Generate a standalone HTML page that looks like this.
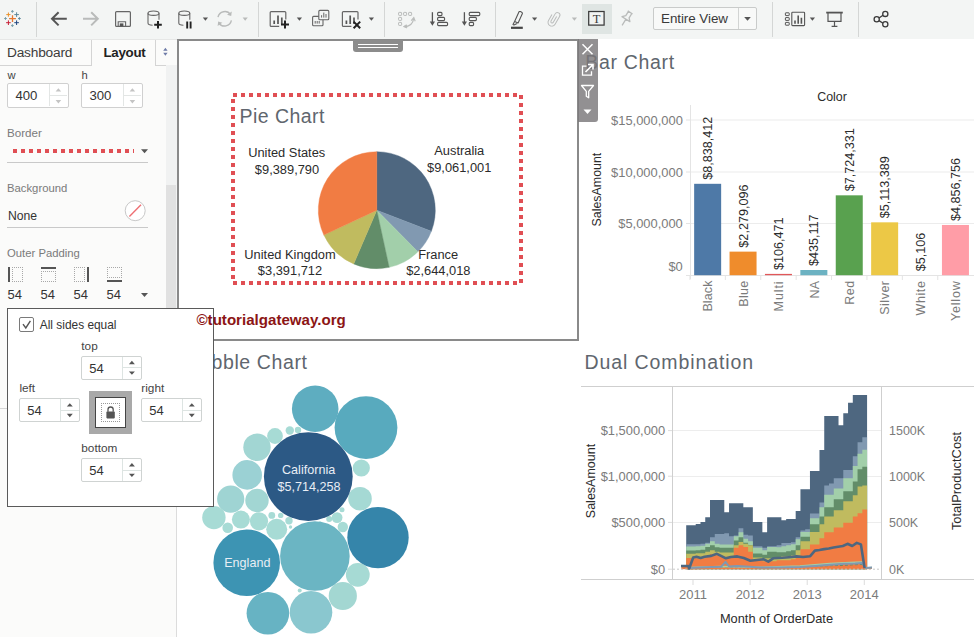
<!DOCTYPE html>
<html lang="en">
<head>
<meta charset="utf-8">
<title>Tableau Dashboard Layout - Outer Padding</title>
<style>
html,body{margin:0;padding:0;}
body{width:974px;height:637px;overflow:hidden;background:#fff;position:relative;font-family:"Liberation Sans",sans-serif;font-size:12px;color:#333;}
.a{position:absolute;}
.t{position:absolute;white-space:nowrap;line-height:1;}
svg{position:absolute;left:0;top:0;overflow:visible;}
svg text{font-family:"Liberation Sans",sans-serif;}
svg text.serif{font-family:"Liberation Serif",serif;}
#toolbar{left:0;top:0;width:974px;height:39px;background:#f3f5f4;}
#leftpanel{left:0;top:39px;width:177px;height:598px;background:#fbfbfa;}
.vsep{position:absolute;top:2px;width:1px;height:35px;background:#d4d6d5;}
.inp{position:absolute;box-sizing:border-box;border:1px solid #d0d0d0;border-radius:2px;background:#fff;}
.lbl{color:#7a7a7a;}
.ul{position:absolute;height:1px;background:#c9c9c9;}
.title{font-size:19.5px;color:#60666e;letter-spacing:.3px;}
.ax{font-size:12.5px;fill:#7b7b7b;}
</style>
</head>
<body>

<!-- ===== canvas zones (under everything) ===== -->
<div class="a" id="canvas" style="left:177px;top:39px;width:797px;height:598px;background:#fff;"></div>

<!-- ZONE: bar chart -->
<div id="barzone" class="a" style="left:0;top:0;width:974px;height:637px;">
<div class="t title" id="bartitle" style="left:585.2px;top:53.3px;letter-spacing:.7px;">Bar Chart</div>
<svg width="974" height="637" viewBox="0 0 974 637">
<rect x="690" y="119.5" width="284" height="1" fill="#ececec"/>
<rect x="690" y="171.5" width="284" height="1" fill="#ececec"/>
<rect x="690" y="223.0" width="284" height="1" fill="#ececec"/>
<rect x="690" y="105" width="1" height="174" fill="#e4e4e4"/>
<rect x="686" y="275" width="288" height="1" fill="#e4e4e4"/>
<rect x="686" y="119.5" width="4" height="1" fill="#e4e4e4"/>
<rect x="686" y="171.5" width="4" height="1" fill="#e4e4e4"/>
<rect x="686" y="223.0" width="4" height="1" fill="#e4e4e4"/>
<rect x="694.15" y="183.81" width="27" height="91.39" fill="#4e79a7"/>
<rect x="689.45" y="275" width="1" height="5" fill="#e4e4e4"/>
<text class="bl" transform="translate(712.25,179.81) rotate(-90)" font-size="12.6" fill="#2b2b2b">$8,838,412</text>
<text class="ax" transform="translate(712.45,280.5) rotate(-90)" text-anchor="end" letter-spacing="0.1">Black</text>
<rect x="729.55" y="251.63" width="27" height="23.57" fill="#ef8c2c"/>
<rect x="724.85" y="275" width="1" height="5" fill="#e4e4e4"/>
<text class="bl" transform="translate(747.65,247.63) rotate(-90)" font-size="12.6" fill="#2b2b2b">$2,279,096</text>
<text class="ax" transform="translate(747.85,280.5) rotate(-90)" text-anchor="end" letter-spacing="0.3">Blue</text>
<rect x="764.95" y="273.90" width="27" height="1.30" fill="#e15759"/>
<rect x="760.25" y="275" width="1" height="5" fill="#e4e4e4"/>
<text class="bl" transform="translate(783.05,269.90) rotate(-90)" font-size="12.6" fill="#2b2b2b">$106,471</text>
<text class="ax" transform="translate(783.25,280.5) rotate(-90)" text-anchor="end" letter-spacing="0.9">Multi</text>
<rect x="800.35" y="270.00" width="27" height="5.20" fill="#6cb2c2"/>
<rect x="795.65" y="275" width="1" height="5" fill="#e4e4e4"/>
<text class="bl" transform="translate(818.45,266.00) rotate(-90)" font-size="12.6" fill="#2b2b2b">$435,117</text>
<text class="ax" transform="translate(818.65,280.5) rotate(-90)" text-anchor="end" letter-spacing="0.3">NA</text>
<rect x="835.75" y="195.33" width="27" height="79.87" fill="#59a14f"/>
<rect x="831.05" y="275" width="1" height="5" fill="#e4e4e4"/>
<text class="bl" transform="translate(853.85,191.33) rotate(-90)" font-size="12.6" fill="#2b2b2b">$7,724,331</text>
<text class="ax" transform="translate(854.05,280.5) rotate(-90)" text-anchor="end" letter-spacing="0.4">Red</text>
<rect x="871.15" y="222.33" width="27" height="52.87" fill="#ecc846"/>
<rect x="866.45" y="275" width="1" height="5" fill="#e4e4e4"/>
<text class="bl" transform="translate(889.25,218.33) rotate(-90)" font-size="12.6" fill="#2b2b2b">$5,113,389</text>
<text class="ax" transform="translate(889.45,280.5) rotate(-90)" text-anchor="end" letter-spacing="0.5">Silver</text>
<rect x="901.85" y="275" width="1" height="5" fill="#e4e4e4"/>
<text class="bl" transform="translate(924.65,271.15) rotate(-90)" font-size="12.6" fill="#2b2b2b">$5,106</text>
<text class="ax" transform="translate(924.85,280.5) rotate(-90)" text-anchor="end" letter-spacing="0.6">White</text>
<rect x="941.95" y="224.98" width="27" height="50.22" fill="#ff9da7"/>
<rect x="937.25" y="275" width="1" height="5" fill="#e4e4e4"/>
<text class="bl" transform="translate(960.05,220.98) rotate(-90)" font-size="12.6" fill="#2b2b2b">$4,856,756</text>
<text class="ax" transform="translate(960.25,280.5) rotate(-90)" text-anchor="end" letter-spacing="0.8">Yellow</text>
<text class="ax" x="682.8" y="124.9" text-anchor="end" style="font-size:12.9px">$15,000,000</text>
<text class="ax" x="682.8" y="176.9" text-anchor="end" style="font-size:12.9px">$10,000,000</text>
<text class="ax" x="682.8" y="228.4" text-anchor="end" style="font-size:12.9px">$5,000,000</text>
<text class="ax" x="682.8" y="270.9" text-anchor="end" style="font-size:12.9px">$0</text>
<text x="832" y="101.2" text-anchor="middle" font-size="12.4" fill="#2b2b2b">Color</text>
<text transform="translate(601,189.6) rotate(-90)" text-anchor="middle" font-size="12.4" fill="#2b2b2b">SalesAmount</text>
</svg>
</div>

<!-- ZONE: bubble chart -->
<div id="bubblezone" class="a" style="left:0;top:0;width:974px;height:637px;">
<div class="t title" id="bubtitle" style="left:186.5px;top:353.3px;letter-spacing:.6px;">Bubble Chart</div>
<svg width="974" height="637" viewBox="0 0 974 637">
<circle cx="315.2" cy="408.8" r="23.3" fill="#5eadc0"/>
<circle cx="366" cy="427.6" r="31.4" fill="#58aabe"/>
<circle cx="361.3" cy="468" r="8.6" fill="#a7dbd5"/>
<circle cx="360" cy="498.7" r="11.8" fill="#a5d9d4"/>
<circle cx="257" cy="447.3" r="13.7" fill="#a2d6d3"/>
<circle cx="275" cy="436" r="7.9" fill="#a7dbd5"/>
<circle cx="289.8" cy="430.5" r="4.2" fill="#a7dbd5"/>
<circle cx="298" cy="430" r="3.2" fill="#a7dbd5"/>
<circle cx="247.2" cy="474.9" r="14.8" fill="#9bd1d4"/>
<circle cx="230.7" cy="499.1" r="13.6" fill="#9fd4d3"/>
<circle cx="257" cy="500.5" r="11.7" fill="#a2d6d3"/>
<circle cx="213.9" cy="517.6" r="11.7" fill="#a7dbd5"/>
<circle cx="240.9" cy="519.6" r="9.0" fill="#a7dbd5"/>
<circle cx="259" cy="521.3" r="9.1" fill="#a7dbd5"/>
<circle cx="227.7" cy="527.7" r="5.3" fill="#a7dbd5"/>
<circle cx="276.7" cy="529.3" r="10.5" fill="#a7dbd5"/>
<circle cx="271.8" cy="515.4" r="3.4" fill="#a7dbd5"/>
<circle cx="280.7" cy="515.4" r="2.7" fill="#a7dbd5"/>
<circle cx="289" cy="520.8" r="3.7" fill="#a7dbd5"/>
<circle cx="290.5" cy="527" r="1.7" fill="#a7dbd5"/>
<circle cx="329.2" cy="519" r="3" fill="#a7dbd5"/>
<circle cx="337.1" cy="517.6" r="5.4" fill="#a7dbd5"/>
<circle cx="342.8" cy="527" r="5.2" fill="#a7dbd5"/>
<circle cx="342" cy="509.7" r="2.5" fill="#a7dbd5"/>
<circle cx="299.7" cy="590.5" r="2" fill="#a7dbd5"/>
<circle cx="283" cy="524" r="2" fill="#a7dbd5"/>
<circle cx="320" cy="523" r="1.8" fill="#a7dbd5"/>
<circle cx="357.8" cy="574.8" r="11.9" fill="#a6dad4"/>
<circle cx="342.8" cy="596" r="14.1" fill="#a3d7d2"/>
<circle cx="378" cy="537.6" r="30.7" fill="#3585aa"/>
<circle cx="246.7" cy="562.7" r="33.3" fill="#3d94b3"/>
<circle cx="314.9" cy="556" r="34.8" fill="#6bb5c3"/>
<circle cx="267.9" cy="613.2" r="21.3" fill="#67b3c3"/>
<circle cx="311" cy="612.2" r="21.3" fill="#8ac7cf"/>
<circle cx="308.3" cy="476.6" r="44.4" fill="#2c5985"/>
<text x="308.6" y="474" text-anchor="middle" font-size="12.6" fill="#e9eef5">California</text>
<text x="309" y="490.6" text-anchor="middle" font-size="12.6" fill="#e9eef5">$5,714,258</text>
<text x="247.3" y="567.2" text-anchor="middle" font-size="12.6" fill="#e9eef5">England</text>
</svg>
</div>

<!-- ZONE: dual combination -->
<div id="dualzone" class="a" style="left:0;top:0;width:974px;height:637px;">
<div class="t title" id="dualtitle" style="left:584.6px;top:353.3px;letter-spacing:.9px;">Dual Combination</div>
<svg width="974" height="637" viewBox="0 0 974 637">
<rect x="673" y="430" width="208" height="1" fill="#ededed"/>
<rect x="673" y="476" width="208" height="1" fill="#ededed"/>
<rect x="673" y="522" width="208" height="1" fill="#ededed"/>
<polygon points="686.20,569.2 686.20,525.20 690.96,525.20 690.96,525.20 695.72,525.20 695.72,524.00 700.48,524.00 700.48,522.00 705.24,522.00 705.24,517.20 710.00,517.20 710.00,500.00 714.76,500.00 714.76,500.00 719.52,500.00 719.52,500.00 724.28,500.00 724.28,512.20 729.04,512.20 729.04,503.20 733.80,503.20 733.80,503.20 738.56,503.20 738.56,503.20 743.32,503.20 743.32,507.30 748.08,507.30 748.08,507.30 752.84,507.30 752.84,522.10 757.60,522.10 757.60,522.10 762.36,522.10 762.36,532.20 767.12,532.20 767.12,517.20 771.88,517.20 771.88,517.20 776.64,517.20 776.64,517.20 781.40,517.20 781.40,520.20 786.16,520.20 786.16,519.00 790.92,519.00 790.92,519.00 795.68,519.00 795.68,510.90 800.44,510.90 800.44,489.20 805.20,489.20 805.20,489.20 809.96,489.20 809.96,470.90 814.72,470.90 814.72,470.90 819.48,470.90 819.48,450.10 824.24,450.10 824.24,415.90 829.00,415.90 829.00,415.90 833.76,415.90 833.76,415.90 838.52,415.90 838.52,425.20 843.28,425.20 843.28,413.30 848.04,413.30 848.04,402.80 852.80,402.80 852.80,395.00 857.56,395.00 857.56,395.00 862.32,395.00 862.32,395.00 867.08,395.00 867.08,569.2" fill="#4e6780"/>
<polygon points="686.20,569.2 686.20,544.20 690.96,544.20 690.96,544.20 695.72,544.20 695.72,544.20 700.48,544.20 700.48,543.70 705.24,543.70 705.24,542.80 710.00,542.80 710.00,537.20 714.76,537.20 714.76,533.90 719.52,533.90 719.52,533.90 724.28,533.90 724.28,533.20 729.04,533.20 729.04,536.20 733.80,536.20 733.80,535.50 738.56,535.50 738.56,528.20 743.32,528.20 743.32,534.70 748.08,534.70 748.08,535.50 752.84,535.50 752.84,546.20 757.60,546.20 757.60,546.20 762.36,546.20 762.36,547.70 767.12,547.70 767.12,546.20 771.88,546.20 771.88,546.20 776.64,546.20 776.64,545.20 781.40,545.20 781.40,542.90 786.16,542.90 786.16,542.90 790.92,542.90 790.92,542.20 795.68,542.20 795.68,537.20 800.44,537.20 800.44,530.50 805.20,530.50 805.20,529.20 809.96,529.20 809.96,513.40 814.72,513.40 814.72,513.40 819.48,513.40 819.48,502.50 824.24,502.50 824.24,485.40 829.00,485.40 829.00,483.60 833.76,483.60 833.76,478.20 838.52,478.20 838.52,478.20 843.28,478.20 843.28,470.00 848.04,470.00 848.04,470.00 852.80,470.00 852.80,456.20 857.56,456.20 857.56,442.30 862.32,442.30 862.32,437.30 867.08,437.30 867.08,569.2" fill="#8199b1"/>
<polygon points="686.20,569.2 686.20,546.60 690.96,546.60 690.96,546.60 695.72,546.60 695.72,546.20 700.48,546.20 700.48,545.70 705.24,545.70 705.24,543.70 710.00,543.70 710.00,541.20 714.76,541.20 714.76,543.70 719.52,543.70 719.52,544.50 724.28,544.50 724.28,544.50 729.04,544.50 729.04,544.50 733.80,544.50 733.80,536.30 738.56,536.30 738.56,532.20 743.32,532.20 743.32,538.80 748.08,538.80 748.08,541.20 752.84,541.20 752.84,547.70 757.60,547.70 757.60,547.70 762.36,547.70 762.36,550.20 767.12,550.20 767.12,546.90 771.88,546.90 771.88,546.90 776.64,546.90 776.64,547.20 781.40,547.20 781.40,546.20 786.16,546.20 786.16,545.20 790.92,545.20 790.92,544.20 795.68,544.20 795.68,539.20 800.44,539.20 800.44,532.00 805.20,532.00 805.20,532.00 809.96,532.00 809.96,518.20 814.72,518.20 814.72,518.20 819.48,518.20 819.48,507.20 824.24,507.20 824.24,494.70 829.00,494.70 829.00,494.70 833.76,494.70 833.76,488.50 838.52,488.50 838.52,488.50 843.28,488.50 843.28,478.20 848.04,478.20 848.04,478.20 852.80,478.20 852.80,466.00 857.56,466.00 857.56,453.70 862.32,453.70 862.32,449.70 867.08,449.70 867.08,569.2" fill="#a2cfaa"/>
<polygon points="686.20,569.2 686.20,550.50 690.96,550.50 690.96,550.50 695.72,550.50 695.72,550.20 700.48,550.20 700.48,549.70 705.24,549.70 705.24,546.90 710.00,546.90 710.00,545.20 714.76,545.20 714.76,547.20 719.52,547.20 719.52,547.70 724.28,547.70 724.28,547.70 729.04,547.70 729.04,547.70 733.80,547.70 733.80,540.40 738.56,540.40 738.56,537.20 743.32,537.20 743.32,542.80 748.08,542.80 748.08,545.00 752.84,545.00 752.84,553.50 757.60,553.50 757.60,553.50 762.36,553.50 762.36,554.70 767.12,554.70 767.12,551.80 771.88,551.80 771.88,551.80 776.64,551.80 776.64,552.20 781.40,552.20 781.40,552.20 786.16,552.20 786.16,551.20 790.92,551.20 790.92,550.20 795.68,550.20 795.68,545.20 800.44,545.20 800.44,536.70 805.20,536.70 805.20,536.70 809.96,536.70 809.96,524.20 814.72,524.20 814.72,524.20 819.48,524.20 819.48,516.50 824.24,516.50 824.24,507.20 829.00,507.20 829.00,507.20 833.76,507.20 833.76,499.20 838.52,499.20 838.52,499.20 843.28,499.20 843.28,491.20 848.04,491.20 848.04,491.20 852.80,491.20 852.80,481.50 857.56,481.50 857.56,469.20 862.32,469.20 862.32,466.80 867.08,466.80 867.08,569.2" fill="#628d69"/>
<polygon points="686.20,569.2 686.20,553.80 690.96,553.80 690.96,553.80 695.72,553.80 695.72,553.20 700.48,553.20 700.48,553.20 705.24,553.20 705.24,551.80 710.00,551.80 710.00,550.20 714.76,550.20 714.76,551.70 719.52,551.70 719.52,552.60 724.28,552.60 724.28,552.60 729.04,552.60 729.04,552.60 733.80,552.60 733.80,545.30 738.56,545.30 738.56,542.00 743.32,542.00 743.32,543.70 748.08,543.70 748.08,545.30 752.84,545.30 752.84,557.50 757.60,557.50 757.60,557.50 762.36,557.50 762.36,558.20 767.12,558.20 767.12,558.20 771.88,558.20 771.88,558.20 776.64,558.20 776.64,557.20 781.40,557.20 781.40,556.20 786.16,556.20 786.16,556.20 790.92,556.20 790.92,555.20 795.68,555.20 795.68,550.20 800.44,550.20 800.44,541.30 805.20,541.30 805.20,541.30 809.96,541.30 809.96,532.00 814.72,532.00 814.72,532.00 819.48,532.00 819.48,524.20 824.24,524.20 824.24,516.50 829.00,516.50 829.00,516.50 833.76,516.50 833.76,510.20 838.52,510.20 838.52,510.20 843.28,510.20 843.28,501.20 848.04,501.20 848.04,501.20 852.80,501.20 852.80,495.20 857.56,495.20 857.56,486.40 862.32,486.40 862.32,485.40 867.08,485.40 867.08,569.2" fill="#c0bb5f"/>
<polygon points="686.20,569.2 686.20,558.00 690.96,558.00 690.96,558.00 695.72,558.00 695.72,558.20 700.48,558.20 700.48,558.20 705.24,558.20 705.24,555.90 710.00,555.90 710.00,554.20 714.76,554.20 714.76,555.20 719.52,555.20 719.52,556.70 724.28,556.70 724.28,556.70 729.04,556.70 729.04,556.70 733.80,556.70 733.80,547.70 738.56,547.70 738.56,545.30 743.32,545.30 743.32,546.90 748.08,546.90 748.08,551.80 752.84,551.80 752.84,560.00 757.60,560.00 757.60,560.00 762.36,560.00 762.36,561.20 767.12,561.20 767.12,561.20 771.88,561.20 771.88,561.20 776.64,561.20 776.64,560.20 781.40,560.20 781.40,560.20 786.16,560.20 786.16,560.20 790.92,560.20 790.92,559.20 795.68,559.20 795.68,555.20 800.44,555.20 800.44,549.20 805.20,549.20 805.20,549.20 809.96,549.20 809.96,544.40 814.72,544.40 814.72,544.40 819.48,544.40 819.48,538.20 824.24,538.20 824.24,532.20 829.00,532.20 829.00,532.20 833.76,532.20 833.76,527.40 838.52,527.40 838.52,527.40 843.28,527.40 843.28,522.70 848.04,522.70 848.04,522.70 852.80,522.70 852.80,516.50 857.56,516.50 857.56,513.20 862.32,513.20 862.32,509.60 867.08,509.60 867.08,569.2" fill="#f17c43"/>
<rect x="681.3" y="567.0" width="4.9" height="2.2" fill="#f17c43"/>
<line x1="673" x2="881" y1="569.2" y2="569.2" stroke="#c8c8c8" stroke-width="1" stroke-dasharray="2 2"/>
<polyline fill="none" stroke="#628d69" stroke-width="1" stroke-dasharray="3 2" points="690,568 720,567.3 760,567.8 800,567 840,565.5 862,564.5 866,568.5 872,568"/>
<polyline fill="none" stroke="#f17c43" stroke-width="1.2" points="690,568.6 740,568 800,567.6 840,566.8 862,566 866,568.6 872,568.4"/>
<polyline fill="none" stroke="#a2cfaa" stroke-width="1.4" points="690,567.5 720,566.5 760,567.2 800,566 830,563.5 850,562.5 862,562 866,568 872,567.5"/>
<polyline fill="none" stroke="#8199b1" stroke-width="2" stroke-linejoin="round" points="689,568 700,567.5 712,567 721,566.8 725.5,561.8 729,566.5 737,566 750,566.8 760,567.5 780,567.6 800,567 815,566 830,564.8 845,563.8 855,563.5 862,563 865.5,568 872,567.6"/>
<polyline fill="none" stroke="#4e6780" stroke-width="2.6" stroke-linejoin="round" points="681,566 688.3,566 689.2,568.5 693.2,557.5 696.5,556.7 700.6,558 704.6,556.7 711.2,555.9 716.9,553.8 721,555.9 725.9,558.3 730.8,557 737.3,556.4 743.8,558 750.3,560.8 756.9,560 763.4,559.2 768.3,561.6 773.2,558.3 782.3,557.8 789,557.2 796.3,556.4 803,557 810.2,556.2 814.9,550.6 819.5,550 824.2,549.1 828.8,548.5 833.5,547.5 838.2,546.8 842.9,546 847.5,543.8 852.2,546 856.8,542.9 860.9,544.4 864.6,568"/>
<rect x="581" y="386" width="393" height="1" fill="#cfcfcf"/>
<rect x="581" y="579" width="393" height="1" fill="#cfcfcf"/>
<rect x="672" y="386" width="1" height="194" fill="#cfcfcf"/>
<rect x="881" y="386" width="1" height="194" fill="#cfcfcf"/>
<rect x="692.5" y="580" width="1" height="5" fill="#dcdcdc"/>
<text class="ax" x="693.0" y="599.4" text-anchor="middle" style="font-size:13px">2011</text>
<rect x="749.6" y="580" width="1" height="5" fill="#dcdcdc"/>
<text class="ax" x="750.1" y="599.4" text-anchor="middle" style="font-size:13px">2012</text>
<rect x="806.7" y="580" width="1" height="5" fill="#dcdcdc"/>
<text class="ax" x="807.2" y="599.4" text-anchor="middle" style="font-size:13px">2013</text>
<rect x="863.8" y="580" width="1" height="5" fill="#dcdcdc"/>
<text class="ax" x="864.3" y="599.4" text-anchor="middle" style="font-size:13px">2014</text>
<text class="ax" x="665.2" y="435.40000000000003" text-anchor="end" style="font-size:12.9px">$1,500,000</text>
<rect x="668" y="430.1" width="4" height="1" fill="#dcdcdc"/>
<text class="ax" x="665.2" y="481.0" text-anchor="end" style="font-size:12.9px">$1,000,000</text>
<rect x="668" y="475.7" width="4" height="1" fill="#dcdcdc"/>
<text class="ax" x="665.2" y="527.1999999999999" text-anchor="end" style="font-size:12.9px">$500,000</text>
<rect x="668" y="521.9" width="4" height="1" fill="#dcdcdc"/>
<text class="ax" x="665.2" y="574.0" text-anchor="end" style="font-size:12.9px">$0</text>
<rect x="668" y="568.7" width="4" height="1" fill="#dcdcdc"/>
<text class="ax" x="889" y="435.0">1500K</text>
<text class="ax" x="889" y="481.2">1000K</text>
<text class="ax" x="889" y="526.9">500K</text>
<text class="ax" x="889" y="573.6">0K</text>
<text x="776.5" y="623" text-anchor="middle" font-size="12.8" fill="#2b2b2b">Month of OrderDate</text>
<text transform="translate(594.5,481) rotate(-90)" text-anchor="middle" font-size="12.5" fill="#2b2b2b">SalesAmount</text>
<text transform="translate(961.4,481) rotate(-90)" text-anchor="middle" font-size="12.9" fill="#2b2b2b">TotalProductCost</text>
</svg>
</div>

<!-- ===== floating pie container ===== -->
<div id="piebox" class="a" style="left:177px;top:39px;width:402px;height:302px;box-sizing:border-box;border:2px solid #8a8a8a;background:#fff;"></div>
<div id="piezone" class="a" style="left:0;top:0;width:974px;height:637px;">
<svg width="974" height="637" viewBox="0 0 974 637">
<path d="M376.8,210.2L376.80,151.70A58.5,58.5 0 0 1 431.38,231.27Z" fill="#4e6780" stroke="#4e6780" stroke-width=".4"/>
<path d="M376.8,210.2L431.38,231.27A58.5,58.5 0 0 1 417.91,251.82Z" fill="#8199b1" stroke="#8199b1" stroke-width=".4"/>
<path d="M376.8,210.2L417.91,251.82A58.5,58.5 0 0 1 389.18,267.37Z" fill="#a2cfaa" stroke="#a2cfaa" stroke-width=".4"/>
<path d="M376.8,210.2L389.18,267.37A58.5,58.5 0 0 1 353.69,263.94Z" fill="#628d69" stroke="#628d69" stroke-width=".4"/>
<path d="M376.8,210.2L353.69,263.94A58.5,58.5 0 0 1 323.84,235.05Z" fill="#c0bb5f" stroke="#c0bb5f" stroke-width=".4"/>
<path d="M376.8,210.2L323.84,235.05A58.5,58.5 0 0 1 376.80,151.70Z" fill="#f17c43" stroke="#f17c43" stroke-width=".4"/>
</svg>
<div class="a" style="left:233px;top:93px;width:284px;height:4px;background:repeating-linear-gradient(90deg,#e04f54 0 4px,transparent 4px 8px);"></div>
<div class="a" style="left:233px;top:281px;width:284px;height:4px;background:repeating-linear-gradient(90deg,#e04f54 0 4px,transparent 4px 8px);"></div>
<div class="a" style="left:231px;top:99px;width:4px;height:180px;background:repeating-linear-gradient(180deg,#e04f54 0 4px,transparent 4px 8px);"></div>
<div class="a" style="left:519px;top:95px;width:4px;height:188px;background:repeating-linear-gradient(180deg,#e04f54 0 4px,transparent 4px 8px);"></div>
<div class="t title" id="pietitle" style="left:239.6px;top:107px;letter-spacing:.45px;">Pie Chart</div>
<style>.pl{font-size:12.85px;color:#2b2b2b;}</style>
<div class="t pl" id="pl1" style="left:226.7px;width:120px;text-align:center;top:147.2px;">United States</div>
<div class="t pl" id="pl2" style="left:227px;width:120px;text-align:center;top:163.5px;">$9,389,790</div>
<div class="t pl" id="pl3" style="left:399.3px;width:120px;text-align:center;top:145.1px;">Australia</div>
<div class="t pl" id="pl4" style="left:399.2px;width:120px;text-align:center;top:161.7px;">$9,061,001</div>
<div class="t pl" id="pl5" style="left:230px;width:120px;text-align:center;top:248.79999999999998px;">United Kingdom</div>
<div class="t pl" id="pl6" style="left:230px;width:120px;text-align:center;top:265.1px;">$3,391,712</div>
<div class="t pl" id="pl7" style="left:378.2px;width:120px;text-align:center;top:248.79999999999998px;">France</div>
<div class="t pl" id="pl8" style="left:378.3px;width:120px;text-align:center;top:265.1px;">$2,644,018</div>
<div class="a" style="left:353px;top:40px;width:50px;height:11.5px;background:#8c8c8c;border-radius:0 0 3px 3px;"></div>
<div class="a" style="left:358px;top:44px;width:40px;height:1.2px;background:#fff;"></div>
<div class="a" style="left:358px;top:47.3px;width:40px;height:1.2px;background:#fff;"></div>
<div class="a" style="left:578px;top:39px;width:20px;height:83px;background:rgba(122,120,122,.82);border-radius:0 0 3px 0;"></div>
<svg width="974" height="637" viewBox="0 0 974 637" fill="none" stroke="#fff" stroke-width="1.5">
<path d="M582.5,44.2l10,10M592.5,44.2l-10,10"/>
<path d="M586.5,66.2h-4v9h9v-4" stroke-width="1.3"/><path d="M585.5,72l7,-7M588,64.5h5v5" stroke-width="1.6"/>
<path d="M581.5,85.5h12l-4.8,5.8v6.5l-2.4,-1.6v-4.9z" stroke-width="1.3" stroke-linejoin="round"/>
<path d="M583.5,109.5h8l-4,4.5z" fill="#fff" stroke="none"/>
</svg>
</div>

<!-- ===== toolbar ===== -->
<div id="toolbar" class="a">
<div class="vsep" style="left:36px;"></div>
<div class="vsep" style="left:258px;"></div>
<div class="vsep" style="left:384px;"></div>
<div class="vsep" style="left:494.5px;"></div>
<div class="vsep" style="left:772px;"></div>
<div class="vsep" style="left:858px;"></div>
<div class="a" style="left:582px;top:4px;width:30px;height:30px;background:#dfe5e3;"></div>
<div class="a" style="left:653px;top:7px;width:104px;height:22.5px;box-sizing:border-box;border:1px solid #c9cbca;border-radius:2px;background:#f8f9f8;"></div>
<div class="a" style="left:738px;top:8px;width:1px;height:20.5px;background:#d2d4d3;"></div>
<div class="t" id="ev" style="left:661px;top:11.9px;font-size:13.4px;color:#3a3a3a;letter-spacing:-.05px;">Entire View</div>
<svg width="974" height="39" viewBox="0 0 974 39" fill="none">
<path d="M9.1,18.6h6.8M12.5,15.200000000000001v6.8" stroke="#e8762d" stroke-width="1.3"/>
<path d="M6.300000000000001,14.6h4.2M8.4,12.5v4.2" stroke="#eb9129" stroke-width="1.0"/>
<path d="M14.3,14.6h4.6M16.6,12.3v4.6" stroke="#5b879b" stroke-width="1.0"/>
<path d="M6.1000000000000005,22.7h4.6M8.4,20.4v4.6" stroke="#c72037" stroke-width="1.0"/>
<path d="M14.3,22.7h4.6M16.6,20.4v4.6" stroke="#1f457e" stroke-width="1.0"/>
<path d="M11.0,11.4h2.8M12.4,10.0v2.8" stroke="#7099a6" stroke-width="0.9"/>
<path d="M11.0,25.6h2.8M12.4,24.200000000000003v2.8" stroke="#7099a6" stroke-width="0.9"/>
<path d="M4.1,18.5h2.8M5.5,17.1v2.8" stroke="#7099a6" stroke-width="0.9"/>
<path d="M18.0,18.5h2.8M19.4,17.1v2.8" stroke="#59879b" stroke-width="0.9"/>
<path d="M66.8,18.8H52M58.6,12.2L52,18.8l6.6,6.6" stroke="#555" stroke-width="2" />
<path d="M83,18.8H97.8M91.2,12.2l6.6,6.6l-6.6,6.6" stroke="#b9bbba" stroke-width="2" />
<rect x="115.6" y="11.6" width="14.8" height="14.8" rx="1" stroke="#666" stroke-width="1.2"/>
<path d="M118.2,26.4v-4.6h7.4v4.6" stroke="#666" stroke-width="1.1"/><rect x="119.8" y="23.4" width="3.6" height="3" fill="#555"/>
<ellipse cx="153.5" cy="13.2" rx="5.5" ry="2.2" stroke="#666" stroke-width="1.1"/><path d="M148,13.2v9.8c0,1.3 2,2.2 4.6,2.3M159,13.2v6.5" stroke="#666" stroke-width="1.1"/>
<path d="M154.2,24.8h7.6M158,21v7.6" stroke="#222" stroke-width="2"/>
<ellipse cx="184.3" cy="13.2" rx="5.5" ry="2.2" stroke="#666" stroke-width="1.1"/><path d="M178.8,13.2v9.8c0,1.3 2,2.2 4.6,2.3M189.8,13.2v6.5" stroke="#666" stroke-width="1.1"/>
<path d="M187.2,21.4v7.2M190.6,21.4v7.2" stroke="#222" stroke-width="1.9"/>
<path d="M202.8,17.6h5.2l-2.6,3.2z" fill="#555"/>
<path d="M218,17.2a7,7 0 0 1 12.6,-2.6M231.4,20.4a7,7 0 0 1 -12.6,2.6" stroke="#b9bbba" stroke-width="1.4"/>
<path d="M231.8,11.6l-0.6,4.4l-4.2,-1.2z" fill="#b9bbba"/><path d="M217.6,26l0.6,-4.4l4.2,1.2z" fill="#b9bbba"/>
<path d="M242.6,17.6h5.2l-2.6,3.2z" fill="#b9bbba"/>
<path d="M285.8,19.5V12.6a1,1 0 0 0 -1,-1H271.2a1,1 0 0 0 -1,1V25.4a1,1 0 0 0 1,1H279.2" stroke="#666" stroke-width="1.2"/><path d="M274.2,24v-3.6M278.0,24v-8.4M281.8,24v-6.6" stroke="#555" stroke-width="1.7"/>
<path d="M281,24.6h8M285,20.6v8" stroke="#222" stroke-width="2"/>
<path d="M296.79999999999995,17.6h5.2l-2.6,3.2z" fill="#555"/>
<rect x="318.8" y="10.4" width="10" height="9.4" rx="1" stroke="#666" stroke-width="1.1" fill="#f3f5f4"/>
<path d="M321.6,17.6v-2.4M323.8,17.6v-5M326,17.6v-3.6" stroke="#666" stroke-width="1"/>
<path d="M318.8,16.4h-5.2a1,1 0 0 0 -1,1v7.4a1,1 0 0 0 1,1h8.4a1,1 0 0 0 1,-1v-5" stroke="#666" stroke-width="1.1"/>
<path d="M315.2,23.6v-2.6M317.2,23.6v-2.6M319.2,23.6v-2.6" stroke="#666" stroke-width="1"/>
<path d="M358.0,19.5V12.6a1,1 0 0 0 -1,-1H343.4a1,1 0 0 0 -1,1V25.4a1,1 0 0 0 1,1H351.4" stroke="#666" stroke-width="1.2"/><path d="M346.4,24v-3.6M350.2,24v-8.4M354.0,24v-6.6" stroke="#555" stroke-width="1.7"/>
<path d="M353.6,21.6l6.6,6.6M360.2,21.6l-6.6,6.6" stroke="#222" stroke-width="2"/>
<path d="M368.79999999999995,17.6h5.2l-2.6,3.2z" fill="#555"/>
<rect x="398.6" y="12.4" width="3" height="3" rx=".6" stroke="#b9bbba" stroke-width="1"/>
<rect x="403.6" y="12.4" width="3" height="3" rx=".6" stroke="#b9bbba" stroke-width="1"/>
<rect x="408.6" y="12.4" width="3" height="3" rx=".6" stroke="#b9bbba" stroke-width="1"/>
<rect x="398.6" y="17.4" width="3" height="3" rx=".6" stroke="#b9bbba" stroke-width="1"/>
<rect x="398.6" y="22.4" width="3" height="3" rx=".6" stroke="#b9bbba" stroke-width="1"/>
<path d="M405,26.8c5,-0.8 8,-4 8.6,-8" stroke="#b9bbba" stroke-width="1.2"/>
<path d="M403.4,26.6l3,-1.8l0.4,3.2z" fill="#b9bbba" stroke="#b9bbba" stroke-width=".8"/><path d="M411.2,20.6l2.6,-3l1.4,3.6" stroke="#b9bbba" stroke-width="1.1"/>
<path d="M432.4,12.2V24" stroke="#555" stroke-width="1.3"/><path d="M429.8,21.6h5.2l-2.6,4.2z" fill="#555"/>
<rect x="437.6" y="12.4" width="4.4" height="3.2" rx="1" stroke="#555" stroke-width="1.1"/>
<rect x="437.6" y="17.4" width="7" height="3.2" rx="1" stroke="#555" stroke-width="1.1"/>
<rect x="437.6" y="22.4" width="10" height="3.2" rx="1" stroke="#555" stroke-width="1.1"/>
<path d="M464.4,12.2V24" stroke="#555" stroke-width="1.3"/><path d="M461.8,21.6h5.2l-2.6,4.2z" fill="#555"/>
<rect x="469.2" y="12.4" width="10.6" height="3.2" rx="1" stroke="#555" stroke-width="1.1"/>
<rect x="469.2" y="17.4" width="7.2" height="3.2" rx="1" stroke="#555" stroke-width="1.1"/>
<rect x="469.2" y="22.4" width="4.4" height="3.2" rx="1" stroke="#555" stroke-width="1.1"/>
<path d="M511,27.8h11.8" stroke="#444" stroke-width="2.2"/>
<path d="M514.6,21.4l4.2,-9.2a1.2,1.2 0 0 1 1.6,-.6l1.3,.6a1.2,1.2 0 0 1 .6,1.6l-4.2,9.2zM514.6,21.4l-1.6,3.2l0.9,.4l3.2,-1.6" stroke="#555" stroke-width="1.1" stroke-linejoin="round"/>
<path d="M532.0,17.6h5.2l-2.6,3.2z" fill="#555"/>
<g transform="translate(554,18.5) rotate(30) scale(.88)"><path d="M1.5,-3.4v7.6a1.5,1.5 0 0 1 -3,0v-9.4a2.9,2.9 0 0 1 5.8,0v10.2a4.3,4.3 0 0 1 -8.6,0v-7.8" stroke="#b9bbba" stroke-width="1.1"/></g>
<path d="M571.8,17.6h5.2l-2.6,3.2z" fill="#b9bbba"/>
<rect x="588.7" y="11.5" width="15.4" height="13.6" stroke="#3a3a3a" stroke-width="1.25" fill="#f1f3f2"/>
<text x="596.6" y="23" text-anchor="middle" class="serif" font-size="12.5" fill="#3a3a3a">T</text>
<g transform="translate(626.3,18.6) rotate(32) scale(1.1)"><path d="M-2.6,-6.6h5.2M-1.8,-6.6v4.6l-2.4,2.6h8.4l-2.4,-2.6v-4.6M0,0.6v6.6" stroke="#b9bbba" stroke-width="1.2" stroke-linejoin="round"/></g>
<path d="M744.2,17h6.6l-3.3,3.8z" fill="#555"/>
<rect x="785.4" y="12.8" width="3.8" height="2.8" rx=".4" stroke="#555" stroke-width="1"/>
<rect x="785.4" y="17.6" width="3.8" height="2.8" rx=".4" stroke="#555" stroke-width="1"/>
<rect x="785.4" y="22.4" width="3.8" height="2.8" rx=".4" stroke="#555" stroke-width="1"/>
<rect x="791.8" y="12.2" width="12.8" height="13.4" rx=".8" stroke="#555" stroke-width="1.1"/>
<path d="M795,23.8v-3.4M798.2,23.8v-8.2M801.4,23.8v-6" stroke="#555" stroke-width="1.6"/>
<path d="M809.8,17.6h5.2l-2.6,3.2z" fill="#555"/>
<path d="M826.2,12.6h16.6" stroke="#555" stroke-width="1.8"/><path d="M828,13v8.4h13v-8.4M834.5,21.4v5M831.6,26.4h5.8" stroke="#555" stroke-width="1.2"/>
<path d="M879,18l4,-2.8M879,20.6l4,2.6" stroke="#3a3a3a" stroke-width="1.3"/>
<circle cx="885.3" cy="13.9" r="2.6" stroke="#3a3a3a" stroke-width="1.3"/>
<circle cx="876.7" cy="19.3" r="2.6" stroke="#3a3a3a" stroke-width="1.3"/>
<circle cx="885.3" cy="24.3" r="2.6" stroke="#3a3a3a" stroke-width="1.3"/>
</svg>
</div>

<!-- ===== left panel ===== -->
<div id="leftpanel" class="a"></div>
<div id="leftzone" class="a" style="left:0;top:0;width:974px;height:637px;">
<div class="a" style="left:0;top:39px;width:177px;height:1px;background:#e6e7e6;"></div>
<div class="a" style="left:0;top:40px;width:92px;height:26px;box-sizing:border-box;border-bottom:1px solid #d4d4d4;border-right:1px solid #d4d4d4;background:#fbfbfa;"></div>
<div class="a" style="left:155px;top:40px;width:22px;height:26px;box-sizing:border-box;border-bottom:1px solid #d4d4d4;border-left:1px solid #d4d4d4;background:#fbfbfa;"></div>
<div class="t" id="tab1" style="left:7px;top:45.84px;font-size:13.7px;letter-spacing:-.2px;color:#3c3c3c;">Dashboard</div>
<div class="t" id="tab2" style="left:103.4px;top:45.84px;font-size:13.3px;letter-spacing:-.25px;font-weight:bold;color:#222;">Layout</div>
<svg width="974" height="637" viewBox="0 0 974 637"><path d="M163.2,50.8h4.4l-2.2,-3zM163.2,52.8h4.4l-2.2,3z" fill="#6f7ca8"/></svg>
<div class="a" style="left:166px;top:65px;width:11px;height:243px;background:#f1f2f2;"></div>
<div class="a" style="left:166px;top:184.5px;width:10px;height:124px;background:#e1e1e1;"></div>
<div class="t" id="lw" style="left:7.5px;top:69.6px;font-size:11.2px;color:#444;">w</div>
<div class="t" id="lh" style="left:81.5px;top:69.6px;font-size:11.2px;color:#444;">h</div>
<div class="inp" style="left:7px;top:83px;width:61.5px;height:24.5px;"></div>
<div class="a" style="left:49px;top:84px;width:1px;height:22px;background:#e3e6e5;"></div>
<div class="a" style="left:50px;top:94.5px;width:17px;height:1px;background:#e3e6e5;"></div>
<div class="t" id="v400" style="left:15.4px;top:89.43px;font-size:13.2px;color:#333;">400</div>
<svg width="974" height="637" viewBox="0 0 974 637"><path d="M55.6,91.6h5.6l-2.8,-3.4zM55.6,100h5.6l-2.8,3.4z" fill="#c4c4c4"/></svg>
<div class="inp" style="left:81px;top:83px;width:61.5px;height:24.5px;"></div>
<div class="a" style="left:123px;top:84px;width:1px;height:22px;background:#e3e6e5;"></div>
<div class="a" style="left:124px;top:94.5px;width:17px;height:1px;background:#e3e6e5;"></div>
<div class="t" id="v300" style="left:89.4px;top:89.43px;font-size:13.2px;color:#333;">300</div>
<svg width="974" height="637" viewBox="0 0 974 637"><path d="M129.6,91.6h5.6l-2.8,-3.4zM129.6,100h5.6l-2.8,3.4z" fill="#c4c4c4"/></svg>
<div class="t lbl" id="lborder" style="left:7px;top:127px;font-size:11.6px;">Border</div>
<div class="a" style="left:13px;top:149px;width:121px;height:4px;background:repeating-linear-gradient(90deg,#e04f54 0 4px,transparent 4px 8px);"></div>
<svg width="974" height="637" viewBox="0 0 974 637"><path d="M141,149.2h7l-3.5,4z" fill="#555"/><path d="M141,293.1h7l-3.5,4z" fill="#555"/></svg>
<div class="ul" style="left:7px;top:162px;width:141px;"></div>
<div class="t lbl" id="lbg" style="left:7px;top:183.23px;font-size:11.3px;">Background</div>
<div class="t" id="lnone" style="left:8px;top:210.37px;font-size:12.2px;color:#333;">None</div>
<svg width="974" height="637" viewBox="0 0 974 637"><circle cx="135.2" cy="210.7" r="10" fill="#fff" stroke="#c8c8c8" stroke-width="1"/><path d="M129.4,216.4L141,204.8" stroke="#ee6f73" stroke-width="1.4"/></svg>
<div class="ul" style="left:7px;top:226.7px;width:141px;"></div>
<div class="t lbl" id="lop" style="left:7px;top:247.73px;font-size:11.3px;">Outer Padding</div>
<div class="a" style="left:8px;top:267px;width:2px;height:15px;background:#555;"></div>
<div class="a" style="left:12px;top:267px;width:11px;height:15px;box-sizing:border-box;border:1px dotted #a8a8a8;"></div>
<div class="a" style="left:41px;top:267px;width:15px;height:2px;background:#555;"></div>
<div class="a" style="left:41px;top:271px;width:15px;height:11px;box-sizing:border-box;border:1px dotted #a8a8a8;"></div>
<div class="a" style="left:87px;top:267px;width:2px;height:15px;background:#555;"></div>
<div class="a" style="left:74px;top:267px;width:11px;height:15px;box-sizing:border-box;border:1px dotted #a8a8a8;"></div>
<div class="a" style="left:107px;top:280px;width:15px;height:2px;background:#555;"></div>
<div class="a" style="left:107px;top:267px;width:15px;height:11px;box-sizing:border-box;border:1px dotted #a8a8a8;"></div>
<div class="t" id="p54_0" style="left:7.6px;top:287.7px;font-size:13px;color:#333;">54</div>
<div class="t" id="p54_1" style="left:40.6px;top:287.7px;font-size:13px;color:#333;">54</div>
<div class="t" id="p54_2" style="left:73.6px;top:287.7px;font-size:13px;color:#333;">54</div>
<div class="t" id="p54_3" style="left:106.6px;top:287.7px;font-size:13px;color:#333;">54</div>
<div class="a" style="left:0;top:407.5px;width:8px;height:1px;background:#d6d6d6;"></div>
<div class="a" style="left:176px;top:507px;width:1px;height:130px;background:#dcdcdc;"></div>
</div>

<!-- ===== padding popup ===== -->
<div id="popup" class="a" style="left:7px;top:308px;width:207px;height:199px;box-sizing:border-box;border:1px solid #5a5a5a;background:#fff;"></div>
<div id="popzone" class="a" style="left:0;top:0;width:974px;height:637px;">
<div class="a" style="left:19px;top:317px;width:15px;height:15px;box-sizing:border-box;border:1px solid #7a7a7a;border-radius:2px;background:#fff;"></div>
<svg width="974" height="637" viewBox="0 0 974 637" fill="none"><path d="M23,324.2l2.8,3.8l4.6,-7.2" stroke="#555" stroke-width="1.4"/></svg>
<div class="t" id="ase" style="left:39.8px;top:320.43px;font-size:11.9px;color:#333;">All sides equal</div>
<div class="t" id="ptop" style="left:81.3px;top:340.51px;font-size:11.8px;color:#444;">top</div>
<div class="inp" style="left:81.3px;top:356px;width:60.5px;height:23.5px;border-color:#cfd3d2;"></div>
<div class="a" style="left:122.3px;top:357px;width:1px;height:21.5px;background:#dde4e2;"></div>
<div class="a" style="left:123.3px;top:367.2px;width:17.5px;height:1px;background:#dde4e2;"></div>
<div class="t" id="s_top" style="left:89.3px;top:361.60px;font-size:13px;color:#333;">54</div>
<svg width="974" height="637" viewBox="0 0 974 637"><path d="M128.9,364.2h6l-3,-3.4zM128.9,371.4h6l-3,3.4z" fill="#555"/></svg>
<div class="t" id="pleft" style="left:19.4px;top:383.11px;font-size:11.8px;color:#444;">left</div>
<div class="inp" style="left:19.2px;top:398.4px;width:60.5px;height:23.5px;border-color:#cfd3d2;"></div>
<div class="a" style="left:60.2px;top:399.4px;width:1px;height:21.5px;background:#dde4e2;"></div>
<div class="a" style="left:61.2px;top:409.59999999999997px;width:17.5px;height:1px;background:#dde4e2;"></div>
<div class="t" id="s_left" style="left:27.2px;top:404.00px;font-size:13px;color:#333;">54</div>
<svg width="974" height="637" viewBox="0 0 974 637"><path d="M66.8,406.59999999999997h6l-3,-3.4zM66.8,413.79999999999995h6l-3,3.4z" fill="#555"/></svg>
<div class="t" id="pright" style="left:141.3px;top:383.11px;font-size:11.8px;color:#444;">right</div>
<div class="inp" style="left:141.2px;top:398.4px;width:60.5px;height:23.5px;border-color:#cfd3d2;"></div>
<div class="a" style="left:182.2px;top:399.4px;width:1px;height:21.5px;background:#dde4e2;"></div>
<div class="a" style="left:183.2px;top:409.59999999999997px;width:17.5px;height:1px;background:#dde4e2;"></div>
<div class="t" id="s_right" style="left:149.2px;top:404.00px;font-size:13px;color:#333;">54</div>
<svg width="974" height="637" viewBox="0 0 974 637"><path d="M188.79999999999998,406.59999999999997h6l-3,-3.4zM188.79999999999998,413.79999999999995h6l-3,3.4z" fill="#555"/></svg>
<div class="t" id="pbot" style="left:81.3px;top:442.61px;font-size:11.8px;color:#444;">bottom</div>
<div class="inp" style="left:81.3px;top:458.3px;width:60.5px;height:23.5px;border-color:#cfd3d2;"></div>
<div class="a" style="left:122.3px;top:459.3px;width:1px;height:21.5px;background:#dde4e2;"></div>
<div class="a" style="left:123.3px;top:469.5px;width:17.5px;height:1px;background:#dde4e2;"></div>
<div class="t" id="s_bot" style="left:89.3px;top:463.90px;font-size:13px;color:#333;">54</div>
<svg width="974" height="637" viewBox="0 0 974 637"><path d="M128.9,466.5h6l-3,-3.4zM128.9,473.7h6l-3,3.4z" fill="#555"/></svg>
<div class="a" style="left:89.2px;top:390.8px;width:43px;height:43px;background:#a9a9a9;"></div>
<div class="a" style="left:95px;top:397px;width:31px;height:31px;box-sizing:border-box;border:1px solid #444;background:#fff;"></div>
<svg width="974" height="637" viewBox="0 0 974 637" fill="none"><rect x="106.4" y="411.6" width="8.4" height="6.8" rx=".8" fill="#555"/><path d="M108,411.8v-2.2a2.6,2.6 0 0 1 5.2,0v2.2" stroke="#555" stroke-width="1.3"/></svg>
<div class="a" style="left:101px;top:403px;width:19px;height:19px;box-sizing:border-box;border:1px dotted #999;"></div>
<div class="t" id="wm" style="left:196.5px;top:311.8px;font-size:15.1px;font-weight:bold;color:#8c1515;">©tutorialgateway.org</div>
</div>

</body>
</html>
